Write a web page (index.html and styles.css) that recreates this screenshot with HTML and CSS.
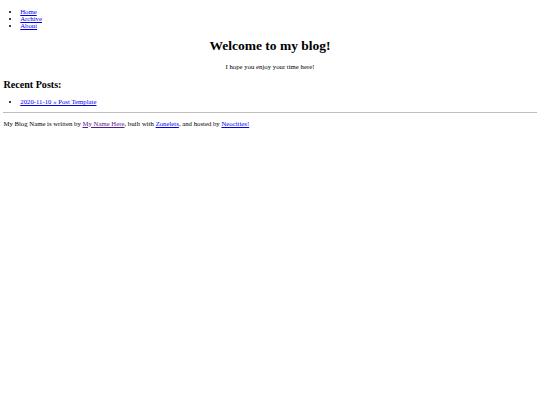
FILE: index.html
```html
<!DOCTYPE html>
<html lang="en">
<head>
<meta charset="utf-8">
<title>My Blog Name</title>
<link rel="stylesheet" href="styles.css">
</head>
<body>
<div class="container">
  <nav class="nav">
    <ul class="list nav-list">
      <li><a href="#">Home</a></li>
      <li><a href="#">Archive</a></li>
      <li><a href="#">About</a></li>
    </ul>
  </nav>
  <main class="content">
    <h1 class="title">Welcome to my blog!</h1>
    <p class="intro">I hope you enjoy your time here!</p>
    <h2 class="subtitle">Recent Posts:</h2>
    <ul class="list">
      <li><a href="#">2020-11-10 » Post Template</a></li>
    </ul>
  </main>
  <footer class="footer">
    <hr class="rule">
    <p class="text">My Blog Name is written by <a class="visited" href="#">My Name Here</a>, built with <a href="#">Zonelets</a>, and hosted by <a href="#">Neocities!</a></p>
  </footer>
</div>
</body>
</html>
```
FILE: styles.css
```css
html {
  background: #ffffff;
}
body {
  margin: 3.375px;
  font-family: "Liberation Serif", "Times New Roman", serif;
  font-size: 6.75px;
  color: #000000;
}
a {
  color: #0000ee;
}
a.visited {
  color: #551a8b;
}
.list {
  margin: 6.75px 0;
  padding-left: 16.875px;
}
.nav-list {
  margin-top: 5px;
}
.title {
  font-size: 13.5px;
  margin: 9.05px 0;
  text-align: center;
}
.intro {
  margin: 6.75px 0;
  text-align: center;
}
.text {
  margin: 6.75px 0;
}
.subtitle {
  font-size: 10.125px;
  margin: 8.4px 0;
}
.rule {
  margin: 3.375px 0;
  border: 0;
  border-top: 1px solid #bdbdbd;
  height: 0;
}
```
